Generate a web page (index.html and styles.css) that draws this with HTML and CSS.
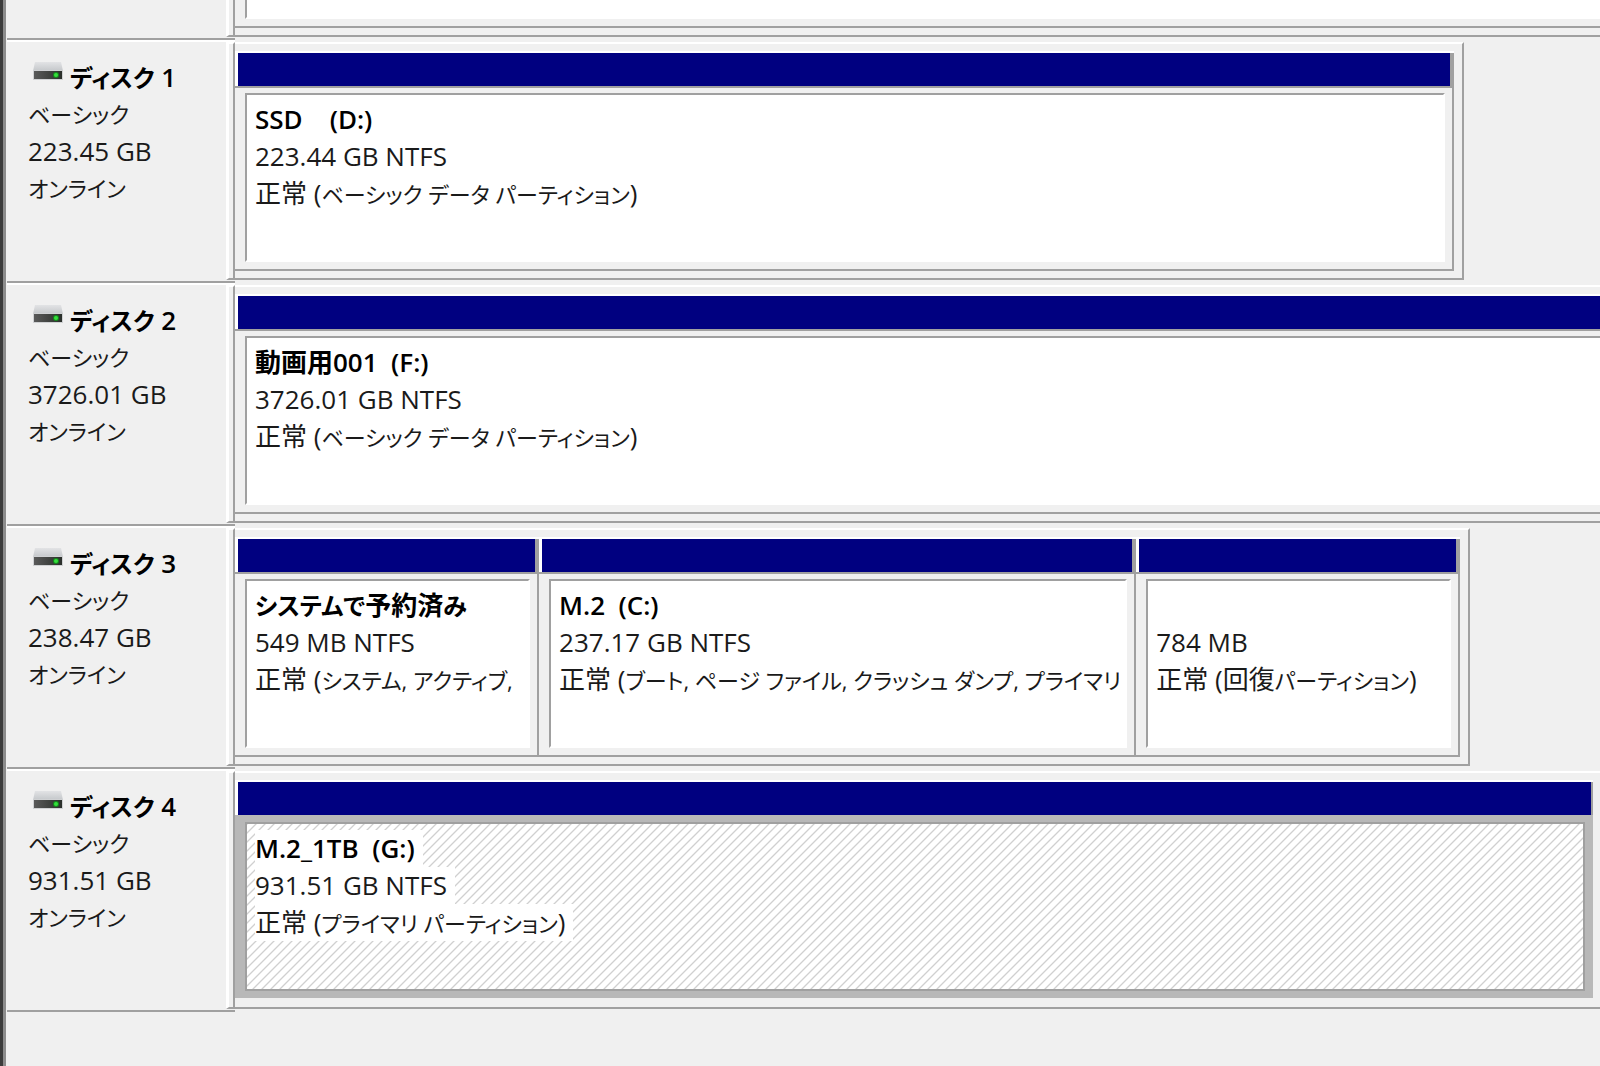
FILE: index.html
```html
<!DOCTYPE html>
<html lang="ja">
<head>
  <meta charset="UTF-8">
  <meta name="viewport" content="width=device-width, initial-scale=1.0">
  <title>ディスクの管理</title>
  <link rel="stylesheet" href="styles.css">
</head>
<body>

  <!-- drive icon, shared by all disks -->
  <svg class="defs" aria-hidden="true">
    <defs>
      <linearGradient id="top" x1="0" y1="0" x2="0" y2="1">
        <stop offset="0" stop-color="#e2e3e5"/>
        <stop offset="1" stop-color="#c4c7ca"/>
      </linearGradient>
      <linearGradient id="front" x1="0" y1="0" x2="1" y2="0">
        <stop offset="0" stop-color="#5a5a5a"/>
        <stop offset="1" stop-color="#2a2f2a"/>
      </linearGradient>
      <symbol id="drive" viewBox="0 0 32 20">
        <path d="M3 1h26l2 9H1z" fill="url(#top)"/>
        <path d="M1 9h30v10H1z" fill="#cfd1d3"/>
        <path d="M2 10h28v8H2z" fill="url(#front)"/>
        <circle cx="24" cy="14" r="3" fill="#138a1c"/>
        <circle cx="24" cy="14" r="2" fill="#35e03c"/>
      </symbol>
    </defs>
  </svg>

  <main class="pane">

    <section class="disk disk-cut">
      <div class="label">
        <div class="label-text"></div>
        <div class="splitter"></div>
      </div>
      <div class="track">
        <div class="group group-wide">
          <div class="partition">
            <div class="bar"></div>
            <div class="body"><div class="box"></div></div>
          </div>
        </div>
      </div>
    </section>

    <section class="disk">
      <div class="label">
        <div class="label-text">
          <h2><svg class="icon"><use href="#drive"/></svg><span class="kana">ディスク</span> 1</h2>
          <p class="kana">ベーシック</p>
          <p>223.45 GB</p>
          <p class="kana">オンライン</p>
        </div>
        <div class="splitter"></div>
      </div>
      <div class="track">
        <div class="group group-ssd">
          <div class="partition">
            <div class="bar"></div>
            <div class="body">
              <div class="box">
                <h3>SSD &nbsp;&nbsp; (D:)</h3>
                <p>223.44 GB NTFS</p>
                <p>正常 (<span class="kana">ベーシック データ パーティション</span>)</p>
              </div>
            </div>
          </div>
        </div>
      </div>
    </section>

    <section class="disk">
      <div class="label">
        <div class="label-text">
          <h2><svg class="icon"><use href="#drive"/></svg><span class="kana">ディスク</span> 2</h2>
          <p class="kana">ベーシック</p>
          <p>3726.01 GB</p>
          <p class="kana">オンライン</p>
        </div>
        <div class="splitter"></div>
      </div>
      <div class="track">
        <div class="group group-wide">
          <div class="partition">
            <div class="bar"></div>
            <div class="body">
              <div class="box">
                <h3>動画用001 &nbsp;(F:)</h3>
                <p>3726.01 GB NTFS</p>
                <p>正常 (<span class="kana">ベーシック データ パーティション</span>)</p>
              </div>
            </div>
          </div>
        </div>
      </div>
    </section>

    <section class="disk">
      <div class="label">
        <div class="label-text">
          <h2><svg class="icon"><use href="#drive"/></svg><span class="kana">ディスク</span> 3</h2>
          <p class="kana">ベーシック</p>
          <p>238.47 GB</p>
          <p class="kana">オンライン</p>
        </div>
        <div class="splitter"></div>
      </div>
      <div class="track">
        <div class="group group-m2">
          <div class="partition system">
            <div class="bar"></div>
            <div class="body">
              <div class="box">
                <h3><span class="kana">システムで</span>予約済<span class="kana">み</span></h3>
                <p>549 MB NTFS</p>
                <p>正常 (<span class="kana">システム, アクティブ,</span></p>
              </div>
            </div>
          </div>
          <div class="partition boot">
            <div class="bar"></div>
            <div class="body">
              <div class="box">
                <h3>M.2 &nbsp;(C:)</h3>
                <p>237.17 GB NTFS</p>
                <p>正常 (<span class="kana">ブート, ページ ファイル, クラッシュ ダンプ, プライマリ</span></p>
              </div>
            </div>
          </div>
          <div class="partition recovery">
            <div class="bar"></div>
            <div class="body">
              <div class="box">
                <h3>&nbsp;</h3>
                <p>784 MB</p>
                <p>正常 (回復<span class="kana">パーティション</span>)</p>
              </div>
            </div>
          </div>
        </div>
      </div>
    </section>

    <section class="disk">
      <div class="label">
        <div class="label-text">
          <h2><svg class="icon"><use href="#drive"/></svg><span class="kana">ディスク</span> 4</h2>
          <p class="kana">ベーシック</p>
          <p>931.51 GB</p>
          <p class="kana">オンライン</p>
        </div>
        <div class="splitter"></div>
      </div>
      <div class="track">
        <div class="group group-full">
          <div class="partition selected">
            <div class="bar"></div>
            <div class="body">
              <div class="box">
                <h3>M.2_1TB &nbsp;(G:)</h3>
                <p>931.51 GB NTFS</p>
                <p>正常 (<span class="kana">プライマリ パーティション</span>)</p>
              </div>
            </div>
          </div>
        </div>
      </div>
    </section>

  </main>

</body>
</html>
```
FILE: styles.css
```css
* {
  box-sizing: border-box;
}

body {
  margin: 0;
  background: #f0f0f0;
  color: #1a1a1a;
  font-family: "Open Sans", "Noto Sans CJK JP", sans-serif;
  font-size: 26px;
  line-height: 37px;
  font-feature-settings: "palt";
}

h2, h3, p {
  height: 37px;
  margin: 0;
  font-size: 26px;
  white-space: nowrap;
}

h2, h3 {
  color: #000;
  font-weight: 600;
}

.defs {
  position: absolute;
  width: 0;
  height: 0;
}

.kana {
  font-size: 22px;
}

h2 .kana,
h3 .kana {
  font-size: 24px;
}

.pane {
  min-height: 100vh;
  border-left: 3px solid #3c3c3c;
  box-shadow: inset 3px 0 #8c8c8c;
  padding-left: 4px;
  overflow: hidden;
}

/* one row per disk */
.disk {
  display: flex;
  height: 243px;
}

.disk-cut {
  height: 40px;
  align-items: flex-end;
  overflow: hidden;
}

.disk-cut > * {
  height: 243px;
}

.label {
  display: flex;
  flex: none;
  width: 228px;
  border-top: 2px solid #fff;
  border-bottom: 2px solid #a0a0a0;
}

.label-text {
  flex: 1;
  padding: 17px 0 0 21px;
}

.icon {
  width: 32px;
  height: 20px;
  margin: 0 6px 6px 4px;
}

.splitter {
  width: 9px;
  margin-bottom: 1px;
  border: solid #a0a0a0;
  border-width: 2px 2px 2px 3px;
  border-top-color: #fff;
  border-left-color: #fff;
}

.track {
  flex: 1;
  min-width: 0;
  padding: 2px 0 3px;
}

.group {
  display: flex;
  height: 100%;
  padding: 7px 8px 7px 0;
  border: solid #a0a0a0;
  border-width: 2px 2px 2px 0;
  border-top-color: #fff;
}

.group-ssd {
  width: 90%;
}

.group-m2 {
  width: 90.5%;
}

.group-wide {
  width: 102%;
}

.group-full {
  width: calc(100% + 3px);
}

.partition {
  display: flex;
  flex: 1;
  flex-direction: column;
  min-width: 0;
  border-top: 2px solid #fff;
}

.system {
  flex-grow: 304;
}

.boot {
  flex-grow: 597;
}

.recovery {
  flex-grow: 324;
}

.bar {
  height: 33px;
  border-left: 3px solid #fff;
  border-right: 4px solid #a0a0a0;
  background: #000080;
}

.body {
  flex: 1;
  padding: 5px 7px 7px 10px;
  border: solid #a0a0a0;
  border-width: 2px 2px 2px 0;
}

.box {
  height: 100%;
  padding: 6px 6px 0 8px;
  border: 2px solid #a0a0a0;
  border-right-color: #fff;
  border-bottom-color: #fff;
  background: #fff;
}

.box p {
  overflow: hidden;
}

/* selected partition: gray frame and hatching */
.selected .bar {
  border-right-width: 2px;
}

.selected .body {
  margin-bottom: 2px;
  padding: 5px 6px 5px 10px;
  border-color: #b8b8b8;
  background: #b8b8b8;
}

.selected .box {
  border-color: #a0a0a0;
  background: linear-gradient(135deg, #d0d0d0 0 5%, #fff 6% 44%, #d0d0d0 45% 55%, #fff 56% 94%, #d0d0d0 95%) 0 0 / 9px 9px;
}

.selected h3,
.selected p {
  width: fit-content;
  padding-right: 8px;
  background: #fff;
}
```
